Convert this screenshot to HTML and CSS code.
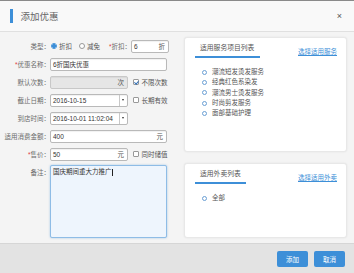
FILE: index.html
```html
<!DOCTYPE html>
<html lang="zh-CN">
<head>
    <meta charset="UTF-8">
    <title>添加优惠</title>
    <link rel="stylesheet" href="styles.css">
</head>
<body>
    <div class="dialog">
        <div class="dialog-head">
            <span class="head-bar"></span>
            <h2>添加优惠</h2>
            <span class="close">×</span>
        </div>

        <div class="dialog-body">
            <div class="form">
                <div class="row">
                    <span class="lbl">类型：</span>
                    <div class="ctrl">
                        <span class="radio checked"></span><span class="opt">折扣</span>
                        <span class="radio"></span><span class="opt">减免</span>
                        <span class="lbl-inline"><em>*</em>折扣：</span>
                        <div class="input discount"><span class="val">6</span><span class="unit">折</span></div>
                    </div>
                </div>

                <div class="row">
                    <span class="lbl"><em>*</em>优惠名称：</span>
                    <div class="ctrl">
                        <div class="input full"><span class="val">6折国庆优惠</span></div>
                    </div>
                </div>

                <div class="row">
                    <span class="lbl">默认次数：</span>
                    <div class="ctrl">
                        <div class="input short disabled"><span class="val"></span><span class="unit">次</span></div>
                        <span class="check checked"></span><span class="opt">不限次数</span>
                    </div>
                </div>

                <div class="row">
                    <span class="lbl">截止日期：</span>
                    <div class="ctrl">
                        <div class="input short"><span class="val">2016-10-15</span><span class="drop"></span></div>
                        <span class="check"></span><span class="opt">长期有效</span>
                    </div>
                </div>

                <div class="row">
                    <span class="lbl">到店时间：</span>
                    <div class="ctrl">
                        <div class="input short"><span class="val">2016-10-01 11:02:04</span><span class="drop"></span></div>
                    </div>
                </div>

                <div class="row">
                    <span class="lbl">适用消费金额：</span>
                    <div class="ctrl">
                        <div class="input full"><span class="val">400</span><span class="unit">元</span></div>
                    </div>
                </div>

                <div class="row">
                    <span class="lbl"><em>*</em>售价：</span>
                    <div class="ctrl">
                        <div class="input short"><span class="val">50</span><span class="unit">元</span></div>
                        <span class="check"></span><span class="opt">同时储值</span>
                    </div>
                </div>

                <div class="row row-top">
                    <span class="lbl">备注：</span>
                    <div class="ctrl">
                        <div class="textarea">国庆期间重大力推广<span class="caret"></span></div>
                    </div>
                </div>
            </div>

            <div class="side">
                <div class="panel panel-service">
                    <div class="panel-head">
                        <span class="tab">适用服务项目列表</span>
                        <a class="link" href="#">选择适用服务</a>
                    </div>
                    <ul class="items">
                        <li>潮流短发烫发服务</li>
                        <li>经典红色系染发</li>
                        <li>潮流男士烫发服务</li>
                        <li>时尚剪发服务</li>
                        <li>面部基础护理</li>
                    </ul>
                </div>

                <div class="panel panel-takeout">
                    <div class="panel-head">
                        <span class="tab">适用外卖列表</span>
                        <a class="link" href="#">选择适用外卖</a>
                    </div>
                    <ul class="items">
                        <li>全部</li>
                    </ul>
                </div>
            </div>
        </div>

        <div class="dialog-foot">
            <button class="btn">添加</button>
            <button class="btn">取消</button>
        </div>
    </div>
</body>
</html>
```

FILE: styles.css
```css
* {
    margin: 0;
    padding: 0;
    box-sizing: border-box;
}

body {
    font-family: 'Liberation Sans', 'Noto Sans CJK SC', sans-serif;
    font-size: 6.5px;
    color: #555;
    background: #f4f4f4;
}

.dialog {
    width: 354px;
    height: 273px;
    display: flex;
    flex-direction: column;
    border-top: 1px solid #8a8a8a;
    background: #f4f4f4;
}

/* header */
.dialog-head {
    height: 31px;
    display: flex;
    align-items: center;
    padding: 0 10px;
    background: #f9f9f9;
    border-bottom: 1px solid #e0e0e0;
}

.head-bar {
    width: 2.5px;
    height: 14px;
    background: #3d8fd8;
    margin-right: 8px;
}

.dialog-head h2 {
    font-size: 9.5px;
    font-weight: normal;
    color: #666;
    flex: 1;
}

.close {
    font-size: 9px;
    color: #555;
    margin-right: 2px;
}

/* body */
.dialog-body {
    flex: 1;
    display: flex;
    padding-top: 5px;
}

.form {
    width: 172px;
}

.row {
    height: 18px;
    display: flex;
    align-items: center;
}

.row-top {
    align-items: flex-start;
    height: auto;
    padding-top: 2px;
}

.row-top .lbl {
    padding-top: 2px;
}

.lbl {
    width: 50px;
    text-align: right;
    color: #6a6a6a;
    white-space: nowrap;
}

em {
    font-style: normal;
    color: #e04040;
}

.ctrl {
    display: flex;
    align-items: center;
}

.opt {
    margin-left: 2px;
    color: #555;
}

.radio {
    width: 6px;
    height: 6px;
    border: 0.8px solid #999;
    border-radius: 50%;
    background: #fff;
    margin-left: 1px;
}

.radio + .opt {
    margin-right: 6px;
}

.radio.checked {
    border-color: #3d8fd8;
    background: radial-gradient(circle, #3d8fd8 0, #3d8fd8 1.6px, #fff 2px);
}

.lbl-inline {
    margin-left: 3px;
    color: #6a6a6a;
}

.check {
    width: 5.5px;
    height: 5.5px;
    border: 0.8px solid #999;
    border-radius: 1px;
    background: #fff;
    margin-left: 5px;
    margin-right: 1px;
    position: relative;
}

.check.checked::after {
    content: '';
    position: absolute;
    left: 1.2px;
    top: 0.2px;
    width: 1.5px;
    height: 3px;
    border: solid #2f6fb8;
    border-width: 0 1px 1px 0;
    transform: rotate(40deg);
}

.input {
    height: 13px;
    border: 1px solid #b9b9b9;
    border-radius: 2px;
    background: #fff;
    display: flex;
    align-items: center;
    color: #333;
    box-shadow: inset 0 1px 1px rgba(0, 0, 0, 0.06);
}

.input .val {
    flex: 1;
    padding-left: 2px;
    white-space: nowrap;
}

.input .unit {
    padding-right: 3px;
    color: #555;
}

.input.full {
    width: 117px;
}

.input.short {
    width: 78px;
}

.input.discount {
    width: 38px;
}

.input.disabled {
    background: #e6e6e6;
    border-color: #c8c8c8;
}

.drop {
    width: 8px;
    height: 100%;
    border-left: 1px solid #c8c8c8;
    position: relative;
}

.drop::after {
    content: '';
    position: absolute;
    left: 2px;
    top: 4.5px;
    border: 1.5px solid transparent;
    border-top: 2px solid #333;
}

.textarea {
    width: 117px;
    height: 73px;
    border: 1px solid #8ebce6;
    border-radius: 2px;
    background: #eef5fd;
    box-shadow: 0 0 2px rgba(61, 143, 216, 0.5);
    padding: 2px 2px;
    color: #333;
    line-height: 8px;
}

.caret {
    display: inline-block;
    width: 0.6px;
    height: 7px;
    background: #222;
    vertical-align: middle;
}

/* right side */
.side {
    width: 163px;
    margin-left: 12px;
    display: flex;
    flex-direction: column;
    gap: 11px;
}

.panel {
    background: #fff;
    border: 1px solid #e8e8e8;
    border-radius: 3px;
    box-shadow: 0 0 2px rgba(0, 0, 0, 0.08);
    padding: 0 9px 0 10px;
}

.panel-service {
    height: 115px;
}

.panel-takeout {
    height: 75px;
}

.panel-head {
    display: flex;
    align-items: flex-end;
    justify-content: space-between;
    height: 20px;
}

.tab {
    font-size: 6.8px;
    color: #555;
    padding: 0 5px 4px 5px;
    border-bottom: 2px solid #3d8fd8;
    min-width: 65px;
}

.panel-takeout .tab {
    min-width: 51px;
}

.link {
    color: #3d8fd8;
    text-decoration: underline;
    margin-bottom: 2px;
}

.items {
    list-style: none;
    margin-top: 9px;
    padding-left: 7px;
}

.items li {
    line-height: 10.3px;
    color: #555;
    display: flex;
    align-items: center;
}

.items li::before {
    content: '';
    width: 3px;
    height: 3px;
    border: 1px solid #6a9fd4;
    border-radius: 50%;
    margin-right: 5px;
}

/* footer */
.dialog-foot {
    height: 30px;
    background: #e3e3e3;
    border-top: 1px solid #d6d6d6;
    display: flex;
    justify-content: flex-end;
    align-items: center;
    gap: 6px;
    padding-right: 9px;
}

.btn {
    width: 31px;
    height: 16px;
    border: none;
    border-radius: 2px;
    background: #3d8fd8;
    color: #fff;
    font-family: inherit;
    font-size: 6.5px;
}
```
